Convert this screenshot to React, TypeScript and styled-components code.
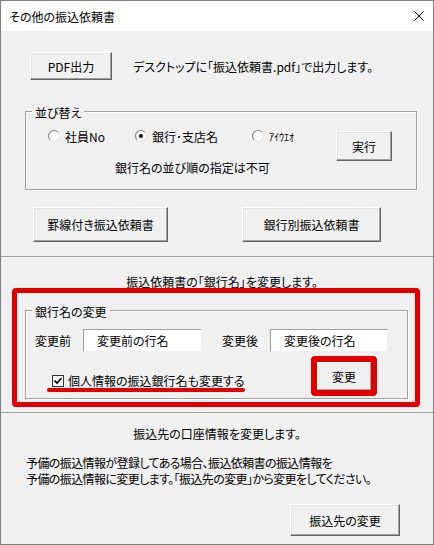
import styled, { createGlobalStyle } from "styled-components";

const GlobalStyle = createGlobalStyle`
  html, body {
    margin: 0;
    padding: 0;
    background: #fff;
  }
  body {
    font-family: "Noto Sans CJK JP", "Liberation Sans", sans-serif;
    font-size: 12px;
    font-feature-settings: "palt";
    color: #000;
  }
  * {
    box-sizing: border-box;
  }
`;

const Window = styled.div`
  width: 434px;
  height: 545px;
  border: 1px solid #7f7f7f;
  background: #f0f0f0;
  display: flex;
  flex-direction: column;
`;

const TitleBar = styled.div`
  height: 30px;
  flex-shrink: 0;
  background: #fff;
  display: flex;
  align-items: center;
  justify-content: space-between;
  padding: 0 9px 0 8px;
  font-size: 12px;
`;

const Close = styled.div`
  width: 10px;
  height: 10px;
  display: flex;
`;

const TopSection = styled.section`
  padding-top: 21px;
`;

const PdfRow = styled.div`
  display: flex;
  align-items: center;
  gap: 21px;
  padding-left: 29px;
`;

const Button = styled.button<{ $w: number; $h: number }>`
  width: ${(p) => p.$w}px;
  height: ${(p) => p.$h}px;
  padding: 0;
  flex-shrink: 0;
  font-family: inherit;
  font-size: 12px;
  font-feature-settings: "palt";
  color: #000;
  background: #f0f0f0;
  border: 1px solid;
  border-color: #fff #646464 #646464 #fff;
  box-shadow: inset -1px -1px 0 #a0a0a0, inset 1px 1px 0 #e3e3e3;
`;

const Marked = styled.div`
  border: 6px solid #e00000;
  border-radius: 4px;
  display: flex;

  ${Button} {
    border-color: #fff #a0a0a0 #a0a0a0 #fff;
    box-shadow: none;
  }
`;

const Frame = styled.div<{ $w: number; $mt: number; $ml: number }>`
  width: ${(p) => p.$w}px;
  margin: ${(p) => p.$mt}px 0 0 ${(p) => p.$ml}px;
  border: 1px solid #a0a0a0;
  box-shadow: 1px 1px 0 #fff, inset 1px 1px 0 #fff;
`;

const Legend = styled.div`
  width: fit-content;
  margin: -6px 0 0 6px;
  padding: 0 3px;
  line-height: 14px;
  background: #f0f0f0;
`;

const SortBody = styled.div`
  display: flex;
  align-items: flex-start;
  padding: 6px 24px 13px 22px;
`;

const SortLeft = styled.div`
  flex: 1;
  display: flex;
  flex-direction: column;
`;

const RadioRow = styled.div`
  height: 20px;
  display: grid;
  grid-template-columns: 87px 117px auto;
  align-items: center;
`;

const RadioItem = styled.label`
  display: flex;
  align-items: center;
  gap: 5px;
  white-space: nowrap;
`;

const RadioDot = styled.span<{ $on?: boolean }>`
  width: 12px;
  height: 12px;
  border-radius: 50%;
  border: 1px solid;
  border-color: #808080 #e3e3e3 #e3e3e3 #808080;
  background: #fff;
  display: flex;
  align-items: center;
  justify-content: center;

  &::after {
    content: "";
    width: 4px;
    height: 4px;
    border-radius: 50%;
    background: ${(p) => (p.$on ? "#000" : "transparent")};
  }
`;

const Kana = styled.span`
  font-size: 10px;
`;

const Note = styled.div`
  margin: 14px 0 0 67px;
  line-height: 16px;
`;

const RunButton = styled(Button)`
  margin-top: 5px;
`;

const ButtonsRow = styled.div`
  display: flex;
  gap: 74px;
  padding-left: 32px;
  margin-top: 17px;
`;

const Divider = styled.hr<{ $mt: number }>`
  margin: ${(p) => p.$mt}px 0 0;
  border: 0;
  border-top: 1px solid #a0a0a0;
  height: 0;
`;

const Heading = styled.div<{ $mt: number; $shift?: number }>`
  margin-top: ${(p) => p.$mt}px;
  padding-left: ${(p) => p.$shift ?? 0}px;
  line-height: 14px;
  text-align: center;
`;

const RedBox = styled.div`
  width: 408px;
  margin: -1px 0 0 11px;
  padding: 17px 0 3px;
  border: 5px solid #e00000;
  border-radius: 4px;
`;

const FieldRow = styled.div`
  display: flex;
  align-items: center;
  padding: 10px 0 0 9px;
  height: 33px;
`;

const FieldLabel = styled.span<{ $ml?: number }>`
  margin-left: ${(p) => p.$ml ?? 0}px;
  margin-right: 12px;
  white-space: nowrap;
`;

const TextBox = styled.input<{ $w: number }>`
  width: ${(p) => p.$w}px;
  height: 23px;
  padding: 0 0 0 13px;
  font-family: inherit;
  font-size: 12px;
  font-feature-settings: "palt";
  color: #000;
  background: #fff;
  border: 1px solid;
  border-color: #a0a0a0 #f0f0f0 #f0f0f0 #a0a0a0;
  outline: none;
`;

const ActionRow = styled.div`
  display: flex;
  justify-content: space-between;
  align-items: flex-start;
  margin-top: 4px;
  padding: 0 30px 2px 21px;
`;

const CheckWrap = styled.div`
  display: flex;
  flex-direction: column;
  margin-top: 17px;
`;

const CheckLabel = styled.label`
  display: flex;
  align-items: center;
  gap: 4px;
  margin-left: 5px;
  line-height: 16px;
  white-space: nowrap;
`;

const CheckBox = styled.span`
  width: 12px;
  height: 12px;
  border: 1px solid #333;
  background: #fff;
  display: flex;
  align-items: center;
  justify-content: center;
`;

const Underline = styled.div`
  width: 198px;
  height: 4px;
  margin-top: -1px;
  border-radius: 2px;
  background: #e00000;
`;

const Paragraph = styled.p`
  margin: 14px 0 0;
  padding-left: 25px;
  line-height: 16px;
  letter-spacing: -0.6px;
`;

const BottomRow = styled.div`
  display: flex;
  justify-content: flex-end;
  padding-right: 33px;
  margin-top: 17px;
`;

export default function App() {
	return (
		<>
			<GlobalStyle />
			<Window>
				<TitleBar>
					<span>その他の振込依頼書</span>
					<Close>
						<svg width="10" height="10" viewBox="0 0 10 10">
							<path d="M0.5 0.5 L9.5 9.5 M9.5 0.5 L0.5 9.5" stroke="#000" strokeWidth="1" />
						</svg>
					</Close>
				</TitleBar>

				<TopSection>
					<PdfRow>
						<Button $w={82} $h={28}>PDF出力</Button>
						<span>デスクトップに「振込依頼書.pdf」で出力します。</span>
					</PdfRow>

					<Frame $w={392} $mt={31} $ml={24}>
						<Legend>並び替え</Legend>
						<SortBody>
							<SortLeft>
								<RadioRow>
									<RadioItem>
										<RadioDot />
										社員No
									</RadioItem>
									<RadioItem>
										<RadioDot $on />
										銀行･支店名
									</RadioItem>
									<RadioItem>
										<RadioDot />
										<Kana>ｱｲｳｴｵ</Kana>
									</RadioItem>
								</RadioRow>
								<Note>銀行名の並び順の指定は不可</Note>
							</SortLeft>
							<RunButton $w={56} $h={30}>実行</RunButton>
						</SortBody>
					</Frame>

					<ButtonsRow>
						<Button $w={135} $h={35}>罫線付き振込依頼書</Button>
						<Button $w={139} $h={35}>銀行別振込依頼書</Button>
					</ButtonsRow>
				</TopSection>

				<Divider $mt={14} />

				<Heading $mt={18} $shift={10}>振込依頼書の「銀行名」を変更します。</Heading>
				<RedBox>
					<Frame $w={383} $mt={0} $ml={8}>
						<Legend>銀行名の変更</Legend>
						<FieldRow>
							<FieldLabel>変更前</FieldLabel>
							<TextBox $w={119} readOnly value="変更前の行名" />
							<FieldLabel $ml={20}>変更後</FieldLabel>
							<TextBox $w={118} readOnly value="変更後の行名" />
						</FieldRow>
						<ActionRow>
							<CheckWrap>
								<CheckLabel>
									<CheckBox>
										<svg width="8" height="8" viewBox="0 0 8 8">
											<path d="M0.5 3.5 L3 6 L7.5 1" fill="none" stroke="#000" strokeWidth="1.6" />
										</svg>
									</CheckBox>
									個人情報の振込銀行名も変更する
								</CheckLabel>
								<Underline />
							</CheckWrap>
							<Marked>
								<Button $w={54} $h={28}>変更</Button>
							</Marked>
						</ActionRow>
					</Frame>
				</RedBox>

				<Divider $mt={5} />

				<Heading $mt={14}>振込先の口座情報を変更します。</Heading>
				<Paragraph>
					予備の振込情報が登録してある場合、振込依頼書の振込情報を
					<br />
					予備の振込情報に変更します。「振込先の変更」から変更をしてください。
				</Paragraph>
				<BottomRow>
					<Button $w={110} $h={32}>振込先の変更</Button>
				</BottomRow>
			</Window>
		</>
	);
}
